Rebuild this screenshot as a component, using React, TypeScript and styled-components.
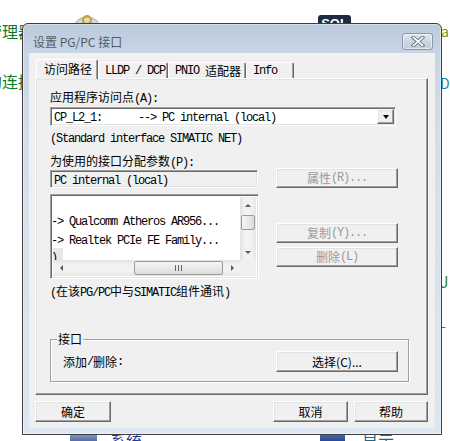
import React from "react";
import styled, { createGlobalStyle, css } from "styled-components";

const GlobalStyle = createGlobalStyle`
  html, body { margin: 0; padding: 0; background: #fff; }
  body {
    font-family: "Noto Sans CJK SC", "Liberation Sans", sans-serif;
    font-size: 12px;
    color: #000;
  }
  * { box-sizing: border-box; }
`;

/* ---------- desktop behind the dialog ---------- */
const Desktop = styled.div`
  position: relative;
  width: 450px;
  height: 441px;
  overflow: hidden;
  background: #fff;
`;

const DeskText = styled.span<{ $x: number; $y: number; $color: string; $size?: number }>`
  position: absolute;
  left: ${(p) => p.$x}px;
  top: ${(p) => p.$y}px;
  color: ${(p) => p.$color};
  font-family: "Noto Sans CJK SC", sans-serif;
  font-size: ${(p) => p.$size ?? 16}px;
  line-height: 1;
  white-space: nowrap;
`;

const DeskIcon = styled.div<{ $x: number; $y: number; $w: number; $h: number; $bg: string }>`
  position: absolute;
  left: ${(p) => p.$x}px;
  top: ${(p) => p.$y}px;
  width: ${(p) => p.$w}px;
  height: ${(p) => p.$h}px;
  background: ${(p) => p.$bg};
  border-radius: 3px;
  color: #fff;
  font-family: "Liberation Sans", sans-serif;
  font-weight: bold;
  font-size: 13px;
  line-height: 1;
  text-align: center;
  padding-top: 2px;
`;

const DeskSvg = styled.svg<{ $x: number; $y: number }>`
  position: absolute;
  left: ${(p) => p.$x}px;
  top: ${(p) => p.$y}px;
`;

/* ---------- window frame ---------- */
const Window = styled.div`
  position: absolute;
  left: 22px;
  top: 23px;
  width: 420px;
  height: 412px;
  z-index: 1;
  display: flex;
  flex-direction: column;
  border: 1px solid #3d3d3d;
  border-radius: 6px 6px 0 0;
  background: linear-gradient(to bottom, #bccbdc 0px, #c7d5e4 30px, #d3dfec 120px, #dce7f3 100%);
  box-shadow: inset 0 0 0 1px rgba(255, 255, 255, 0.45);
`;

const TitleBar = styled.div`
  height: 29px;
  flex: none;
  display: flex;
  align-items: center;
  justify-content: space-between;
  padding: 5px 8px 0 10px;
`;

const Title = styled.span`
  font-family: "Noto Sans CJK SC", "Liberation Sans", sans-serif;
  font-size: 12px;
  line-height: 16px;
  color: #555c64;
  margin-top: 1px;
`;

const CloseButton = styled.div`
  width: 31px;
  height: 17px;
  border: 1px solid #8797ad;
  border-radius: 3px;
  background: linear-gradient(to bottom, #e0e8f1, #cad6e3 50%, #c0cedd);
  box-shadow: inset 0 0 0 1px rgba(255, 255, 255, 0.5);
  display: flex;
  align-items: center;
  justify-content: center;
`;

const Client = styled.div`
  flex: 1;
  margin: 0 6px 6px 6px;
  background: #f0f0f0;
  padding: 6px 7px 6px 6px;
  display: flex;
  flex-direction: column;
`;

/* ---------- tabs ---------- */
const TabStrip = styled.div`
  height: 19px;
  flex: none;
  display: flex;
  align-items: flex-end;
  padding-left: 1px;
  position: relative;
  z-index: 2;
`;

const Tab = styled.div<{ $w: number; $active?: boolean }>`
  width: ${(p) => p.$w}px;
  height: 16px;
  padding: 1px 0 0 6px;
  display: flex;
  align-items: center;
  white-space: pre;
  line-height: 14px;
  background: #f0f0f0;
  border-top: 1px solid #fff;
  border-left: 1px solid #fff;
  border-right: 1px solid #696969;
  box-shadow: inset -1px 0 0 #a0a0a0;
  border-radius: 2px 2px 0 0;
  ${(p) =>
    p.$active &&
    css`
      height: 20px;
      margin-bottom: -1px;
      padding: 0 0 2px 7px;
    `}
`;

const Panel = styled.div`
  height: 317px;
  flex: none;
  border: 1px solid;
  border-color: #fff #696969 #696969 #fff;
  box-shadow: inset -1px -1px 0 #a0a0a0, inset 1px 1px 0 #e3e3e3;
  padding: 11px 0 0 14px;
  display: flex;
  flex-direction: column;
  align-items: flex-start;
`;

/* ---------- text ---------- */
const Mono = styled.span`
  font-family: "Liberation Mono", "Courier New", monospace;
  font-size: 12px;
  letter-spacing: -1.2px;
`;

const Label = styled.div<{ $mt?: number }>`
  height: 14px;
  line-height: 14px;
  white-space: pre;
  margin-top: ${(p) => p.$mt ?? 0}px;
`;

function Txt({ children }: { children: string }) {
  const parts = children.split(/([\x20-\x7E]+)/).filter(Boolean);
  return (
    <>
      {parts.map((p, i) =>
        /^[\x20-\x7E]+$/.test(p) ? <Mono key={i}>{p}</Mono> : <span key={i}>{p}</span>
      )}
    </>
  );
}

/* ---------- controls ---------- */
const sunken = css`
  border: 1px solid;
  border-color: #a0a0a0 #fff #fff #a0a0a0;
  box-shadow: inset 1px 1px 0 #696969, inset -1px -1px 0 #e3e3e3;
`;

const raised = css`
  border: 1px solid;
  border-color: #fff #696969 #696969 #fff;
  box-shadow: inset -1px -1px 0 #a0a0a0, inset 1px 1px 0 #e3e3e3;
`;

const Combo = styled.div`
  ${sunken};
  width: 346px;
  height: 19px;
  flex: none;
  margin-top: 3px;
  background: #fff;
  padding: 1px 1px 1px 2px;
  display: flex;
  align-items: center;
  white-space: pre;
  line-height: 14px;
`;

const ComboText = styled.span`
  flex: 1;
  padding-left: 1px;
`;

const DropButton = styled.div`
  ${raised};
  width: 17px;
  height: 15px;
  background: #f0f0f0;
  display: flex;
  align-items: center;
  justify-content: center;
`;

const DownTriangle = styled.span`
  width: 0;
  height: 0;
  border-left: 3.5px solid transparent;
  border-right: 3.5px solid transparent;
  border-top: 4px solid #000;
`;

const Row = styled.div<{ $mt?: number }>`
  display: flex;
  align-items: flex-start;
  flex: none;
  margin-top: ${(p) => p.$mt ?? 0}px;
`;

const Field = styled.div`
  ${sunken};
  width: 208px;
  height: 18px;
  margin-top: 2px;
  background: #f0f0f0;
  padding: 1px 0 0 3px;
  line-height: 14px;
  white-space: pre;
  overflow: hidden;
`;

const Button = styled.div<{ $w: number; $h?: number; $disabled?: boolean; $ml?: number }>`
  ${raised};
  width: ${(p) => p.$w}px;
  height: ${(p) => p.$h ?? 20}px;
  margin-left: ${(p) => p.$ml ?? 0}px;
  background: #f0f0f0;
  display: flex;
  align-items: center;
  justify-content: center;
  white-space: nowrap;
  line-height: 14px;
  color: ${(p) => (p.$disabled ? "#9a9a9a" : "#000")};
  flex: none;
`;

const ButtonColumn = styled.div`
  display: flex;
  flex-direction: column;
  gap: 4px;
  padding-top: 29px;
  margin-left: 17px;
`;

/* ---------- list box ---------- */
const ListBox = styled.div`
  ${sunken};
  width: 209px;
  height: 85px;
  background: #fff;
  padding: 2px;
  display: grid;
  grid-template-columns: 1fr 16px;
  grid-template-rows: 1fr 16px;
`;

const ListContent = styled.div`
  overflow: hidden;
  white-space: pre;
`;

const ListRow = styled.div<{ $h: number }>`
  height: ${(p) => p.$h}px;
  line-height: ${(p) => p.$h}px;
  margin-left: -2px;
`;

const Selected = styled.span`
  display: inline-block;
  width: 12px;
  background: #e8e8e8;
`;

const VScroll = styled.div`
  background: linear-gradient(to right, #e2e2e2, #f2f2f2 30%, #f2f2f2 70%, #e6e6e6);
  display: flex;
  flex-direction: column;
  align-items: center;
`;

const HScroll = styled.div`
  background: linear-gradient(to bottom, #e2e2e2, #f2f2f2 30%, #f2f2f2 70%, #e6e6e6);
  display: flex;
  align-items: center;
`;

const Corner = styled.div`
  background: #f0f0f0;
`;

const ArrowBox = styled.div`
  width: 16px;
  height: 16px;
  flex: none;
  display: flex;
  align-items: center;
  justify-content: center;
`;

const Arrow = styled.span<{ $dir: "up" | "down" | "left" | "right" }>`
  width: 0;
  height: 0;
  ${(p) =>
    p.$dir === "up" &&
    css`
      border-left: 3px solid transparent;
      border-right: 3px solid transparent;
      border-bottom: 3px solid #5a5a5a;
    `}
  ${(p) =>
    p.$dir === "down" &&
    css`
      border-left: 3px solid transparent;
      border-right: 3px solid transparent;
      border-top: 3px solid #5a5a5a;
    `}
  ${(p) =>
    p.$dir === "left" &&
    css`
      border-top: 3px solid transparent;
      border-bottom: 3px solid transparent;
      border-right: 3px solid #5a5a5a;
    `}
  ${(p) =>
    p.$dir === "right" &&
    css`
      border-top: 3px solid transparent;
      border-bottom: 3px solid transparent;
      border-left: 3px solid #5a5a5a;
    `}
`;

const VTrack = styled.div`
  flex: 1;
  width: 16px;
  padding: 2px 1px 0 1px;
`;

const VThumb = styled.div`
  height: 15px;
  border: 1px solid #9a9a9a;
  border-radius: 2px;
  background: linear-gradient(to right, #f6f6f6, #dcdcdc);
`;

const HTrack = styled.div`
  flex: 1;
  height: 16px;
  padding: 1px 0 1px 65px;
`;

const HThumb = styled.div`
  width: 89px;
  height: 14px;
  border: 1px solid #9a9a9a;
  border-radius: 2px;
  background: linear-gradient(to bottom, #f6f6f6, #dcdcdc);
  display: flex;
  align-items: center;
  justify-content: center;
`;

const Grip = styled.span`
  width: 7px;
  height: 6px;
  background: repeating-linear-gradient(to right, #666 0 1px, transparent 1px 3px);
`;

/* ---------- group box ---------- */
const Group = styled.fieldset`
  width: 359px;
  margin: 34px 0 0 0;
  padding: 0 6px;
  border: 1px solid #a0a0a0;
  box-shadow: 1px 1px 0 #fff, inset 1px 1px 0 #fff;
  min-width: 0;
  flex: none;
`;

const Legend = styled.legend`
  padding: 0 1px;
  height: 14px;
  line-height: 14px;
  font-size: 12px;
`;

const GroupRow = styled.div`
  display: flex;
  align-items: center;
  padding: 5px 4px 9px 6px;
  line-height: 14px;
  white-space: pre;
`;

const Push = styled.div`
  flex: 1;
`;

/* ---------- dialog buttons ---------- */
const ButtonBar = styled.div`
  margin-top: 6px;
  display: flex;
  justify-content: space-between;
`;

const ButtonGroup = styled.div`
  display: flex;
  gap: 6px;
`;

export default function App() {
  return (
    <>
      <GlobalStyle />
      <Desktop>
        <DeskText $x={-14} $y={23} $color="#0b7a2e">管理器</DeskText>
        <DeskText $x={-14} $y={73} $color="#0b7a2e">的连接</DeskText>
        <DeskSvg $x={72} $y={12} width="30" height="14" viewBox="0 0 30 14">
          <path d="M2 14 Q4 6 15 5 Q26 6 28 14 Z" fill="#d8d8d8" stroke="#a8a8a8" />
          <circle cx="15" cy="8" r="4" fill="none" stroke="#c8a020" strokeWidth="2" />
        </DeskSvg>
        <DeskIcon $x={318} $y={15} $w={33} $h={22} $bg="#1f2a44">SQL</DeskIcon>
        <DeskText $x={441} $y={24} $color="#5f9a1a" $size={14}>a</DeskText>
        <DeskText $x={440} $y={76} $color="#1a8a9a" $size={14}>D</DeskText>
        <DeskText $x={440} $y={273} $color="#3a8a20" $size={16}>J</DeskText>
        <DeskText $x={441} $y={318} $color="#2a8a2a" $size={14}>-</DeskText>
        <DeskIcon $x={70} $y={428} $w={27} $h={16} $bg="linear-gradient(#b8c4d0, #3a5a9a)" />
        <DeskText $x={110} $y={432} $color="#1a3a9a">系统</DeskText>
        <DeskIcon $x={320} $y={428} $w={25} $h={16} $bg="linear-gradient(#6a8ac0, #1a3a8a)" />
        <DeskText $x={362} $y={432} $color="#1a6a8a">显示</DeskText>

        <Window>
          <TitleBar>
            <Title>设置 PG/PC 接口</Title>
            <CloseButton>
              <svg width="14" height="11" viewBox="0 0 14 11">
                <path d="M2.5 1.5 L11.5 9.5 M11.5 1.5 L2.5 9.5" stroke="#5d6b7e" strokeWidth="3.6" strokeLinecap="square" />
                <path d="M2.5 1.5 L11.5 9.5 M11.5 1.5 L2.5 9.5" stroke="#fff" strokeWidth="1.8" strokeLinecap="square" />
              </svg>
            </CloseButton>
          </TitleBar>
          <Client>
            <TabStrip>
              <Tab $w={62} $active>
                <Txt>访问路径</Txt>
              </Tab>
              <Tab $w={70}>
                <Txt>LLDP / DCP</Txt>
              </Tab>
              <Tab $w={78}>
                <Txt>PNIO 适配器</Txt>
              </Tab>
              <Tab $w={48}>
                <Txt>Info</Txt>
              </Tab>
            </TabStrip>
            <Panel>
              <Label>
                <Txt>应用程序访问点(A):</Txt>
              </Label>
              <Combo>
                <ComboText>
                  <Mono>{"CP_L2_1:      --> PC internal (local)"}</Mono>
                </ComboText>
                <DropButton>
                  <DownTriangle />
                </DropButton>
              </Combo>
              <Label $mt={4}>
                <Mono>(Standard interface SIMATIC NET)</Mono>
              </Label>
              <Label $mt={10}>
                <Txt>为使用的接口分配参数(P):</Txt>
              </Label>
              <Row>
                <Field>
                  <Mono>PC internal (local)</Mono>
                </Field>
                <Button $w={122} $ml={18} $disabled>
                  <Txt>属性(R)...</Txt>
                </Button>
              </Row>
              <Row $mt={6}>
                <ListBox>
                  <ListContent>
                    <ListRow $h={13} />
                    <ListRow $h={19}>
                      <Mono>-&gt; Qualcomm Atheros AR956...</Mono>
                    </ListRow>
                    <ListRow $h={19}>
                      <Mono>-&gt; Realtek PCIe FE Family...</Mono>
                    </ListRow>
                    <ListRow $h={16}>
                      <Selected>
                        <Mono>)</Mono>
                      </Selected>
                    </ListRow>
                  </ListContent>
                  <VScroll>
                    <ArrowBox>
                      <Arrow $dir="up" />
                    </ArrowBox>
                    <VTrack>
                      <VThumb />
                    </VTrack>
                    <ArrowBox>
                      <Arrow $dir="down" />
                    </ArrowBox>
                  </VScroll>
                  <HScroll>
                    <ArrowBox>
                      <Arrow $dir="left" />
                    </ArrowBox>
                    <HTrack>
                      <HThumb>
                        <Grip />
                      </HThumb>
                    </HTrack>
                    <ArrowBox>
                      <Arrow $dir="right" />
                    </ArrowBox>
                  </HScroll>
                  <Corner />
                </ListBox>
                <ButtonColumn>
                  <Button $w={122} $disabled>
                    <Txt>复制(Y)...</Txt>
                  </Button>
                  <Button $w={122} $disabled>
                    <Txt>删除(L)</Txt>
                  </Button>
                </ButtonColumn>
              </Row>
              <Label $mt={5}>
                <Txt>(在该PG/PC中与SIMATIC组件通讯)</Txt>
              </Label>
              <Group>
                <Legend>接口</Legend>
                <GroupRow>
                  <Txt>添加/删除:</Txt>
                  <Push />
                  <Button $w={122} $h={21}>
                    选择(C)...
                  </Button>
                </GroupRow>
              </Group>
            </Panel>
            <ButtonBar>
              <Button $w={76} $h={21}>
                确定
              </Button>
              <ButtonGroup>
                <Button $w={75} $h={21}>
                  取消
                </Button>
                <Button $w={74} $h={21}>
                  帮助
                </Button>
              </ButtonGroup>
            </ButtonBar>
          </Client>
        </Window>
      </Desktop>
    </>
  );
}
